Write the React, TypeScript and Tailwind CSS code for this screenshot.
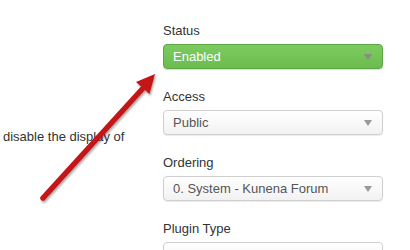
import React from "react";

const Caret = ({ color }: { color: string }) => (
  <svg width="8" height="6" viewBox="0 0 8 6" className="shrink-0">
    <path d="M0 0 L8 0 L4 6 Z" fill={color} />
  </svg>
);

type FieldProps = { label: string; value?: string; green?: boolean };

const Field: React.FC<FieldProps> = ({ label, value, green }) => (
  <div className="mb-[21px]">
    <div className="mb-[6px] h-[14px] text-[13px] leading-[14px] text-[#333]">{label}</div>
    {green ? (
      <div className="flex h-[25px] items-center justify-between rounded-[4px] border border-[#5ca646] bg-gradient-to-b from-[#7ccb5f] to-[#6bbd50] pl-[9px] pr-[10px] text-[13px] text-white shadow-[0_1px_1px_rgba(0,0,0,0.15)]">
        <span>{value}</span>
        <Caret color="#8a8a8a" />
      </div>
    ) : (
      <div className="flex h-[25px] items-center justify-between rounded-[4px] border border-[#cfcfcf] bg-gradient-to-b from-white to-[#f2f2f2] pl-[9px] pr-[10px] text-[13px] text-[#555] shadow-[0_1px_1px_rgba(0,0,0,0.08)]">
        <span>{value}</span>
        {value && <Caret color="#999" />}
      </div>
    )}
  </div>
);

export default function App() {
  return (
    <div className="relative h-[250px] w-[410px] overflow-hidden bg-white font-['Liberation_Sans',Arial,sans-serif]">
      <div className="flex">
        <div className="w-[163px] pl-[3px] pt-[128px] text-[13px] leading-[18px] text-[#333]">
          disable the display of
        </div>
        <div className="w-[220px] pt-[24px]">
          <Field label="Status" value="Enabled" green />
          <Field label="Access" value="Public" />
          <Field label="Ordering" value="0. System - Kunena Forum" />
          <Field label="Plugin Type" value="" />
        </div>
      </div>
      <svg
        className="pointer-events-none absolute left-0 top-0"
        width="410"
        height="250"
        viewBox="0 0 410 250"
      >
        <defs>
          <filter id="sh" x="-20%" y="-20%" width="140%" height="140%">
            <feDropShadow dx="1" dy="2" stdDeviation="1.2" floodColor="#000" floodOpacity="0.35" />
          </filter>
        </defs>
        <g filter="url(#sh)">
          <line x1="43" y1="198" x2="145" y2="86" stroke="#c41518" strokeWidth="5.5" strokeLinecap="round" />
          <polygon points="155,74 149.5,94 136,82" fill="#c41518" />
        </g>
      </svg>
    </div>
  );
}
